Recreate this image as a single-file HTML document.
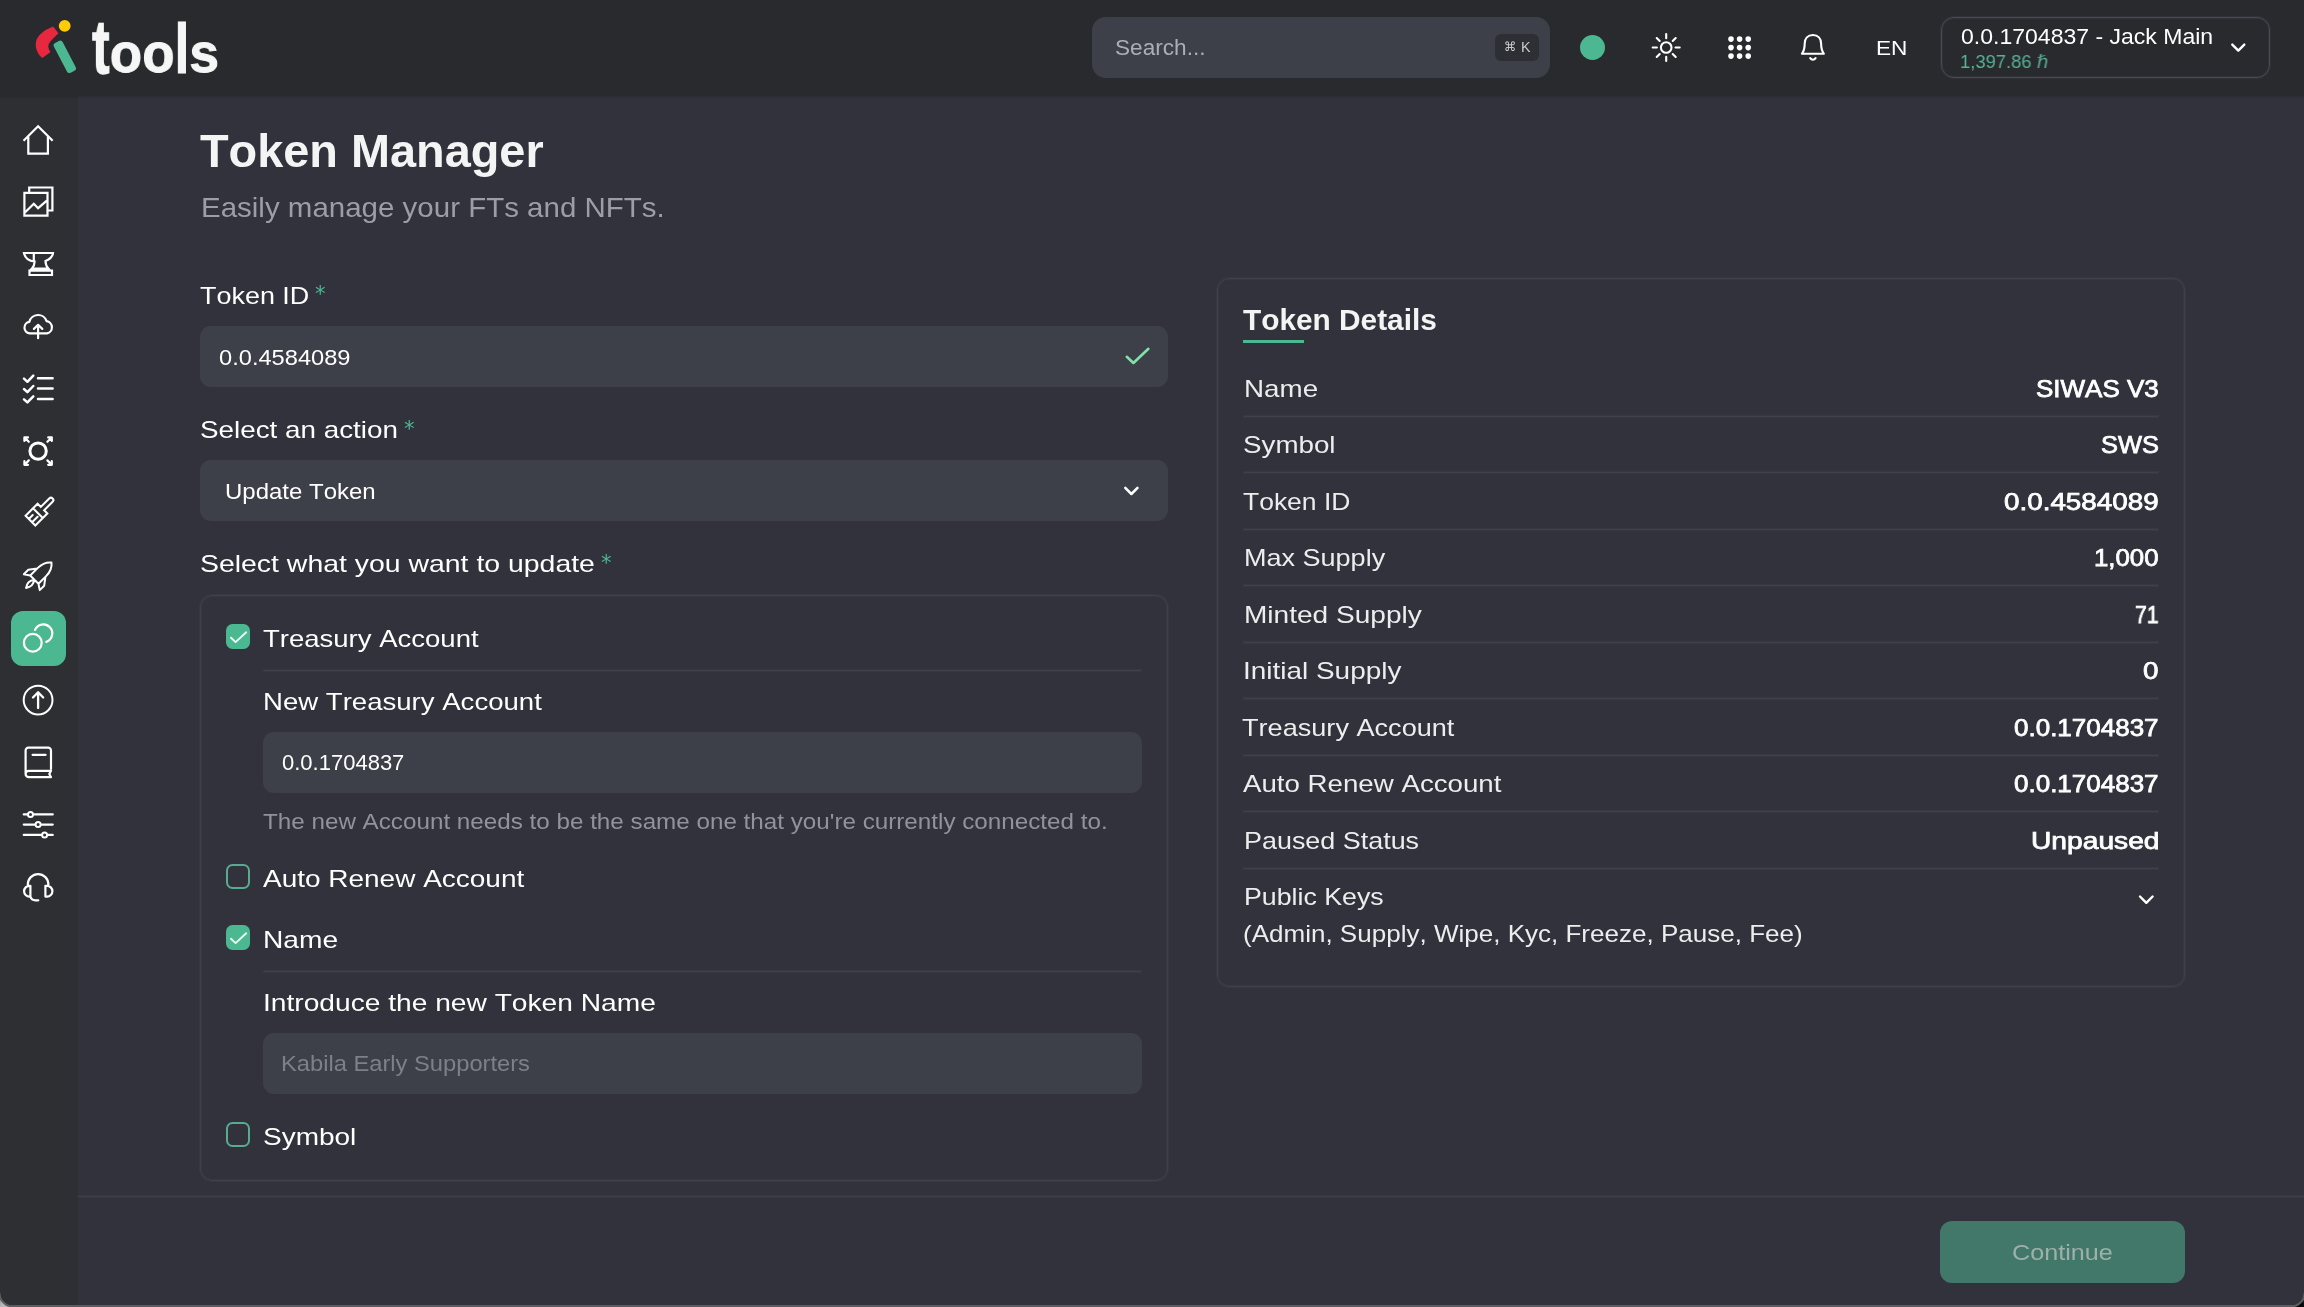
<!DOCTYPE html>
<html lang="en">
<head>
<meta charset="utf-8">
<title>Token Manager</title>
<style>
*{box-sizing:border-box;margin:0;padding:0}
html,body{width:2304px;height:1307px;overflow:hidden;background:#32323c}
body{position:relative;font-family:"Liberation Sans","DejaVu Sans",sans-serif;color:#fff;font-kerning:none;-webkit-font-smoothing:antialiased}
header,aside,main,section,nav,div,span,h1,h2,p,label,button,svg,footer,i,b{position:absolute;display:block}
.t{white-space:nowrap;line-height:1;font-weight:400;transform-origin:0 0;will-change:transform}
header,aside,main{left:0;top:0;width:0;height:0}
.bg-h{left:0;top:0;width:2304px;height:96px;background:#292a2e;box-shadow:0 0 3px rgba(0,0,0,.25)}
header{z-index:1}
.bg-s{left:0;top:96px;width:78px;height:1211px;background:#2e2f33}
.in{background:#3e4049;border-radius:11px}
.card{border:1px solid #3f414a;border-radius:12px;box-shadow:0 0 0 1px rgba(66,68,78,.3),inset 0 0 0 1px rgba(66,68,78,.3)}
.med{-webkit-text-stroke:0.75px #fff}
.hr{height:1px;background:#3f414a;box-shadow:0 0 0 1px rgba(66,68,78,.3)}
.cb{border-radius:6.5px}
.cb.on{background:#4cb892}
.cb.off{border:2px solid #58ab90}
.logo i{position:static;display:inline-block;font-style:normal;transform:scaleY(0.775);transform-origin:0 79.4%}
.logo i.a{transform:scaleY(1.07)}
button{border:0;background:#41786a;border-radius:12px;font-family:inherit}
</style>
</head>
<body>
<header><div class="bg-h"></div>
<svg style="left:30px;top:14px;width:56px;height:68px" viewBox="30 14 56 68" aria-hidden="true">
<circle cx="64.7" cy="25.8" r="5.9" fill="#ffcc05"/>
<path d="M52.9 27.4 C44.5 30.5 36.7 36.5 36.5 44 C36.4 49.3 38.6 53.6 42.2 57 L49.4 51.8 C47.6 49.3 47 46.4 48 43.8 C49.5 40.2 53.8 37 57.4 33.3 Z" fill="#e8283f" stroke="#e8283f" stroke-width="1.6" stroke-linejoin="round"/>
<rect x="-16.8" y="-4.9" width="33.6" height="9.8" rx="2.8" fill="#4cb892" transform="translate(64.8 56.8) rotate(62.4)"/>
</svg>
<span class="t logo" aria-label="tools" style="left:92.3px;top:14.4px;font-size:70.6px;font-weight:700;color:#f6f6f6;-webkit-text-stroke:1.2px #f6f6f6;transform:scaleX(0.752)"><i class="a">t</i><i>oo</i>l<i>s</i></span>
<div class="in" style="left:1092px;top:17px;width:458px;height:61px;border-radius:14px"></div>
<span class="t" style="left:1115.37px;top:37px;font-size:22px;transform:scaleX(1.0278);color:#adaeb5;">Search...</span>
<div style="left:1494.5px;top:34px;width:44.5px;height:27px;background:#2e2f34;border-radius:6px"></div>
<span class="t" style="left:1503.6px;top:41.2px;font-size:12.5px;color:#c9c9cd;font-family:'DejaVu Sans','Liberation Sans',sans-serif">⌘</span>
<span class="t" style="left:1520.63px;top:40px;font-size:14.3px;color:#c9c9cd;">K</span>
<div style="left:1580.2px;top:34.8px;width:25px;height:25px;background:#4cb892;border-radius:50%"></div>
<svg style="left:1640px;top:22px;width:210px;height:52px" viewBox="1640 22 210 52" fill="none" stroke="#fff" stroke-width="2.1" stroke-linecap="round" stroke-linejoin="round" aria-hidden="true">
<circle cx="1666.2" cy="47.5" r="5.3"/>
<path d="M1666.2 34v4.2M1666.2 56.8v4.2M1652.7 47.5h4.2M1675.5 47.5h4.2M1656.7 38l3 3M1672.7 54l3 3M1656.7 57l3-3M1672.7 41l3-3"/>
<g fill="#fff" stroke="none">
<circle cx="1731" cy="39.1" r="2.8"/><circle cx="1739.6" cy="39.1" r="2.8"/><circle cx="1748.2" cy="39.1" r="2.8"/>
<circle cx="1731" cy="47.6" r="2.8"/><circle cx="1739.6" cy="47.6" r="2.8"/><circle cx="1748.2" cy="47.6" r="2.8"/>
<circle cx="1731" cy="56.1" r="2.8"/><circle cx="1739.6" cy="56.1" r="2.8"/><circle cx="1748.2" cy="56.1" r="2.8"/>
</g>
<path d="M1812.9 35c-5.2 0-8.2 3.7-8.2 8.6 0 5.2-1.3 8.3-2.8 10.2h22c-1.5-1.9-2.8-5-2.8-10.2 0-4.9-3-8.6-8.2-8.6z"/>
<path d="M1810.2 58.2c0.7 1 1.6 1.5 2.7 1.5s2-0.5 2.7-1.5"/>
</svg>
<span class="t" style="left:1876.45px;top:37px;font-size:21px;transform:scaleX(1.0763);">EN</span>
<div style="left:1941px;top:17px;width:329px;height:61px;border:1px solid #494a51;border-radius:13px;box-shadow:0 0 0 1px rgba(76,77,86,.25),inset 0 0 0 1px rgba(76,77,86,.25)"></div>
<span class="t" style="left:1960.6px;top:26px;font-size:22.3px;transform:scaleX(1.0327);">0.0.1704837 - Jack Main</span>
<span class="t" style="left:1960.1px;top:53px;font-size:18.5px;transform:scaleX(0.9928);color:#55b394;">1,397.86 ℏ</span>
<svg style="left:2226px;top:38px;width:26px;height:20px" viewBox="2226 38 26 20" fill="none" stroke="#fff" stroke-width="2.4" stroke-linecap="round" stroke-linejoin="round" aria-hidden="true"><path d="M2232.3 44.6l6 6 6-6"/></svg></header>
<aside><div class="bg-s"></div>
<div style="left:11px;top:611px;width:55px;height:55px;background:#4cb892;border-radius:12px"></div>
<svg style="left:0;top:96px;width:78px;height:1211px" viewBox="0 96 78 1211" fill="none" stroke="#fff" stroke-width="2.2" stroke-linecap="round" stroke-linejoin="round" aria-hidden="true">
<!-- home -->
<path d="M24.3 140L38.1 126.2L51.9 140M28.3 136.3V153.7H47.9V136.3" stroke-linecap="square" stroke-linejoin="miter"/>
<!-- gallery -->
<path d="M24.4 192.8H47.5V215.6H24.4zM29.2 192V187.5H52.4V210.5H48.3M25.2 212.3L33.8 203.7L38.1 208.2L46.8 200.6" stroke-linejoin="miter" stroke-linecap="butt"/>
<!-- anvil -->
<path d="M24 253H53C52.5 258 48 260 45.5 261C45.5 264.5 46.5 266.5 48.3 268.5H32C33.8 266.5 34.6 264.5 34.6 261.5C29 261 25 258 24 253zM33.8 253V260.8M29.5 270.6H52V275H29.5z" stroke-linejoin="miter"/>
<!-- cloud upload -->
<path d="M29.8 333.4A5.8 5.8 0 0 1 29.3 321.9A9 9 0 0 1 46.6 321.2A6.2 6.2 0 0 1 47 333.4ZM38.1 338.2V325M33.9 328.9L38.1 324.8L42.3 328.9"/>
<!-- checklist -->
<path d="M24 378.7L27.4 381.8L33.3 375.7M24 389L27.4 392.1L33.3 386M24 399.3L27.4 402.4L33.3 396.3" stroke-width="2.5"/>
<path d="M38 378.3H52.6M38 388.6H52.6M38 398.9H52.6" stroke-width="2.5"/>
<!-- token / expand -->
<circle cx="38.1" cy="451.1" r="8.2" stroke-width="3"/>
<path d="M28.8 441.8L24.6 437.6M24.4 441V437.4H28M47.4 441.8L51.6 437.6M48.2 437.4H51.8V441M28.8 460.4L24.6 464.6M24.4 461.2V464.8H28M47.4 460.4L51.6 464.6M48.2 464.8H51.8V461.2" stroke-width="2.2"/>
<!-- brush -->
<g transform="translate(-0.8 -0.3) rotate(45 38.5 513) translate(38.5 509) scale(0.92) translate(-38.5 -509)">
<path d="M36.4 493.5a2.6 2.6 0 0 1 5.2 0V506.5H46.5V513.5H31.5V506.5H36.4zM31.5 513.5H46.5V525H31.5zM36.5 525V519M41.5 525V516.5" stroke-linejoin="miter"/>
</g>
<!-- rocket -->
<g transform="translate(0.6 -0.6) rotate(45 38.5 575.5) translate(38.5 575.5) scale(0.9) translate(-38.5 -575.5)">
<path d="M38.5 556C43.5 560 45 566 45 571V583H32V571C32 566 33.5 560 38.5 556zM32 572L26 580V587L32 583M45 572L51 580V587L45 583M38.5 583C35.5 587 35.5 592 38.5 596C41.5 592 41.5 587 38.5 583z"/>
</g>
<!-- active: coins -->
<circle cx="32.8" cy="642.7" r="8.9" stroke-width="2.2"/>
<path d="M35 629.9A9 9 0 1 1 46.3 641.9" stroke-width="2.2"/>
<!-- arrow up circle -->
<circle cx="38.1" cy="700.1" r="14.4" stroke-width="2"/>
<path d="M38.1 708V692.3M33 697.5L38.1 692.3L43.2 697.5" stroke-width="2.3"/>
<!-- book -->
<path d="M51 769V750.5A2.8 2.8 0 0 0 48.2 747.7H28.4A2.8 2.8 0 0 0 25.6 750.5V774A3.2 3.2 0 0 0 28.8 777.2H51L49.3 774L51 770.8H28.8A3.2 3.2 0 0 0 25.6 774M32.6 754.8H45.6"/>
<!-- sliders -->
<path d="M23.8 814.4H27.5M33.5 814.4H52.7M23.8 824.6H35M41.2 824.6H52.7M23.8 834.9H41.5M47.7 834.9H52.7" stroke-width="2.3"/>
<circle cx="30.5" cy="814.4" r="2.5" stroke-width="2"/><circle cx="38.1" cy="824.6" r="2.5" stroke-width="2"/><circle cx="44.6" cy="834.9" r="2.5" stroke-width="2"/>
<!-- headset -->
<path d="M27.8 886V884.4A10.3 10.3 0 0 1 48.4 884.4V886M30.4 885.8V896.6H29.5A5.4 5.4 0 0 1 29.5 885.8zM45.4 885.8V896.6H47A5.4 5.4 0 0 0 47 885.8zM30.4 896.6C31 899 33 900.3 35.5 900.3H38.3"/>
</svg></aside>
<main><h1 class="t" style="left:199.87px;top:128px;font-size:46px;transform:scaleX(1.0185);font-weight:700;color:#f4f4f4;">Token Manager</h1>
<p class="t" style="left:200.68px;top:194px;font-size:27.4px;transform:scaleX(1.0765);color:#9c9da6;">Easily manage your FTs and NFTs.</p>
<label class="t" style="left:199.79px;top:284px;font-size:23.8px;transform:scaleX(1.1319);">Token ID</label>
<span class="t" style="left:315.27px;top:283.82px;font-size:21px;color:#4cb892;font-family:'DejaVu Sans','Liberation Sans',sans-serif">*</span>
<div class="in" style="left:200px;top:326px;width:968px;height:61px;"></div>
<span class="t" style="left:218.88px;top:348px;font-size:21.3px;transform:scaleX(1.1105);">0.0.4584089</span>
<svg style="left:1120px;top:342px;width:36px;height:28px" viewBox="1120 342 36 28" fill="none" stroke="#7fe2a9" stroke-width="2.6" stroke-linecap="round" stroke-linejoin="round" aria-hidden="true"><path d="M1126.8 356.8L1133.4 363L1148.4 348.8"/></svg>
<label class="t" style="left:199.64px;top:418px;font-size:23.8px;transform:scaleX(1.169);">Select an action</label>
<span class="t" style="left:404.37px;top:419.02px;font-size:21px;color:#4cb892;font-family:'DejaVu Sans','Liberation Sans',sans-serif">*</span>
<div class="in" style="left:200px;top:460px;width:968px;height:61px;"></div>
<span class="t" style="left:224.95px;top:482px;font-size:21.3px;transform:scaleX(1.1264);">Update Token</span>
<svg style="left:1118px;top:480px;width:28px;height:22px" viewBox="1118 480 28 22" fill="none" stroke="#fff" stroke-width="2.5" stroke-linecap="round" stroke-linejoin="round" aria-hidden="true"><path d="M1125.3 487.8L1131.4 494L1137.5 487.8"/></svg>
<label class="t" style="left:199.61px;top:552px;font-size:23.8px;transform:scaleX(1.194);">Select what you want to update</label>
<span class="t" style="left:601.07px;top:552.62px;font-size:21px;color:#4cb892;font-family:'DejaVu Sans','Liberation Sans',sans-serif">*</span>
<div class="card" style="left:200px;top:595px;width:968px;height:586px;"></div>
<div class="cb on" style="left:226px;top:624.4px;width:24.4px;height:25px;"><svg style="left:0;top:0;width:25px;height:25px" viewBox="0 0 25 25" fill="none" stroke="#eafff7" stroke-width="1.9" stroke-linecap="round" stroke-linejoin="round" aria-hidden="true"><path d="M5 13.7L9.6 18.1L20.2 8.3"/></svg></div>
<label class="t" style="left:262.58px;top:627px;font-size:23.8px;transform:scaleX(1.1561);">Treasury Account</label>
<div class="hr" style="left:264px;top:670px;width:877px;height:1px;"></div>
<label class="t" style="left:262.94px;top:690px;font-size:23.8px;transform:scaleX(1.1584);">New Treasury Account</label>
<div class="in" style="left:263px;top:732px;width:879px;height:61px;"></div>
<span class="t" style="left:282.34px;top:753px;font-size:21.3px;transform:scaleX(1.0331);">0.0.1704837</span>
<p class="t" style="left:263.06px;top:812px;font-size:21.3px;transform:scaleX(1.1371);color:#91929b;">The new Account needs to be the same one that you're currently connected to.</p>
<div class="cb off" style="left:226px;top:864px;width:24.4px;height:25px;"></div>
<label class="t" style="left:263.05px;top:867px;font-size:23.8px;transform:scaleX(1.1754);">Auto Renew Account</label>
<div class="cb on" style="left:226px;top:925px;width:24.4px;height:25px;"><svg style="left:0;top:0;width:25px;height:25px" viewBox="0 0 25 25" fill="none" stroke="#eafff7" stroke-width="1.9" stroke-linecap="round" stroke-linejoin="round" aria-hidden="true"><path d="M5 13.7L9.6 18.1L20.2 8.3"/></svg></div>
<label class="t" style="left:262.89px;top:928px;font-size:23.8px;transform:scaleX(1.1839);">Name</label>
<div class="hr" style="left:264px;top:971px;width:877px;height:1px;"></div>
<label class="t" style="left:262.6px;top:991px;font-size:23.8px;transform:scaleX(1.1831);">Introduce the new Token Name</label>
<div class="in" style="left:263px;top:1032.6px;width:879px;height:61px;"></div>
<span class="t" style="left:281.46px;top:1054px;font-size:21.3px;transform:scaleX(1.1128);color:#7e7f89;">Kabila Early Supporters</span>
<div class="cb off" style="left:226px;top:1122.3px;width:24.4px;height:25px;"></div>
<label class="t" style="left:262.53px;top:1125px;font-size:23.8px;transform:scaleX(1.1762);">Symbol</label>
<section class="card" style="left:1217px;top:278px;width:968px;height:709px;"></section>
<h2 class="t" style="left:1243.07px;top:306px;font-size:29.2px;transform:scaleX(1.0211);font-weight:700;color:#f4f4f4;">Token Details</h2>
<div style="left:1243px;top:339.5px;width:61.2px;height:3.8px;background:#4cb892"></div>
<span class="t" style="left:1243.92px;top:377px;font-size:23.8px;transform:scaleX(1.1674);color:#ededee;">Name</span>
<b class="t med" style="left:2035.92px;top:378px;font-size:23.2px;transform:scaleX(1.1208);">SIWAS V3</b>
<div class="hr" style="left:1244px;top:416px;width:914px;height:1px;"></div>
<span class="t" style="left:1243.24px;top:433px;font-size:23.8px;transform:scaleX(1.1658);color:#ededee;">Symbol</span>
<b class="t med" style="left:2100.85px;top:434px;font-size:23.2px;transform:scaleX(1.0961);">SWS</b>
<div class="hr" style="left:1244px;top:472px;width:914px;height:1px;"></div>
<span class="t" style="left:1243.01px;top:490px;font-size:23.8px;transform:scaleX(1.1119);color:#ededee;">Token ID</span>
<b class="t med" style="left:2004.21px;top:491px;font-size:23.2px;transform:scaleX(1.1991);">0.0.4584089</b>
<div class="hr" style="left:1244px;top:529px;width:914px;height:1px;"></div>
<span class="t" style="left:1243.98px;top:546px;font-size:23.8px;transform:scaleX(1.1353);color:#ededee;">Max Supply</span>
<b class="t med" style="left:2094.03px;top:547px;font-size:23.2px;transform:scaleX(1.1123);">1,000</b>
<div class="hr" style="left:1244px;top:585px;width:914px;height:1px;"></div>
<span class="t" style="left:1243.9px;top:603px;font-size:23.8px;transform:scaleX(1.1786);color:#ededee;">Minted Supply</span>
<b class="t med" style="left:2135.12px;top:604px;font-size:23.2px;transform:scaleX(0.9113);">71</b>
<div class="hr" style="left:1244px;top:642px;width:914px;height:1px;"></div>
<span class="t" style="left:1243.22px;top:659px;font-size:23.8px;transform:scaleX(1.1741);color:#ededee;">Initial Supply</span>
<b class="t med" style="left:2143.21px;top:660px;font-size:23.2px;transform:scaleX(1.1993);">0</b>
<div class="hr" style="left:1244px;top:698px;width:914px;height:1px;"></div>
<span class="t" style="left:1242.39px;top:716px;font-size:23.8px;transform:scaleX(1.1389);color:#ededee;">Treasury Account</span>
<b class="t med" style="left:2014.28px;top:717px;font-size:23.2px;transform:scaleX(1.121);">0.0.1704837</b>
<div class="hr" style="left:1244px;top:755px;width:914px;height:1px;"></div>
<span class="t" style="left:1242.55px;top:772px;font-size:23.8px;transform:scaleX(1.1628);color:#ededee;">Auto Renew Account</span>
<b class="t med" style="left:2014.28px;top:773px;font-size:23.2px;transform:scaleX(1.121);">0.0.1704837</b>
<div class="hr" style="left:1244px;top:811px;width:914px;height:1px;"></div>
<span class="t" style="left:1243.59px;top:829px;font-size:23.8px;transform:scaleX(1.131);color:#ededee;">Paused Status</span>
<b class="t med" style="left:2030.82px;top:830px;font-size:23.2px;transform:scaleX(1.2158);">Unpaused</b>
<div class="hr" style="left:1244px;top:868px;width:914px;height:1px;"></div>
<span class="t" style="left:1244.01px;top:885px;font-size:23.8px;transform:scaleX(1.1231);color:#ededee;">Public Keys</span>
<span class="t" style="left:1243.49px;top:922px;font-size:23.8px;transform:scaleX(1.0934);color:#ededee;">(Admin, Supply, Wipe, Kyc, Freeze, Pause, Fee)</span>
<svg style="left:2132px;top:888px;width:28px;height:22px" viewBox="2132 888 28 22" fill="none" stroke="#fff" stroke-width="2.4" stroke-linecap="round" stroke-linejoin="round" aria-hidden="true"><path d="M2140 896.5L2146.3 902.8L2152.6 896.5"/></svg>
<div style="left:78px;top:1196px;width:2226px;height:1px;background:#3d3f48;box-shadow:0 0 0 1px rgba(64,66,76,.3)"></div>
<button style="left:1940px;top:1221px;width:245px;height:62px;"><span class="t" style="left:72.32px;top:21px;font-size:22.5px;transform:scaleX(1.118);color:#9fb0aa;">Continue</span></button></main>
<svg style="left:0;top:1290px;width:2304px;height:17px" viewBox="0 1290 2304 17" aria-hidden="true">
<rect x="0" y="1305" width="2304" height="2" fill="#5c5d61"/>
<path d="M-0.500 1293A13.500 13.500 0 0 0 13 1306.500V1308H-1Z" fill="#b8b8b8" stroke="#5c5d61" stroke-width="2"/>
<path d="M2304.500 1293A13.500 13.500 0 0 1 2291 1306.500V1308H2305Z" fill="#040507" stroke="#5c5d61" stroke-width="2"/>
</svg>
</body>
</html>
